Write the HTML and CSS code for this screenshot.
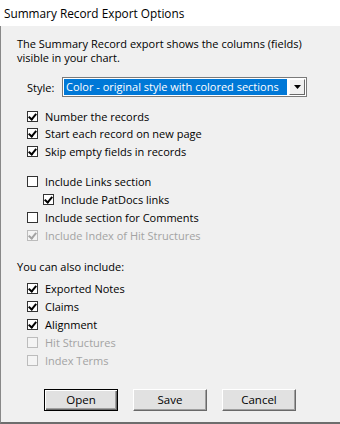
FILE: index.html
```html
<!DOCTYPE html>
<html>
<head>
<meta charset="utf-8">
<link rel="stylesheet" href="styles.css">
</head>
<body>
<div class="window">
  <div class="titlebar">Summary Record Export Options</div>
  <div class="content">
    <p class="intro">The Summary Record export shows the columns (fields)<br>visible in your chart.</p>
    <div class="style-row">
      <span class="style-label">Style:</span>
      <div class="combo">
        <span class="combo-value">Color - original style with colored sections</span>
        <span class="combo-btn"><svg width="7" height="4" viewBox="0 0 7 4"><path d="M0 0h7L3.5 4z" fill="#000"/></svg></span>
      </div>
    </div>

    <div class="group group-first">
      <div class="check"><span class="box on"></span><span class="lbl">Number the records</span></div>
      <div class="check"><span class="box on"></span><span class="lbl">Start each record on new page</span></div>
      <div class="check"><span class="box on"></span><span class="lbl">Skip empty fields in records</span></div>
    </div>

    <div class="group group-second">
      <div class="check"><span class="box"></span><span class="lbl">Include Links section</span></div>
      <div class="check indent"><span class="box on"></span><span class="lbl">Include PatDocs links</span></div>
      <div class="check"><span class="box"></span><span class="lbl">Include section for Comments</span></div>
      <div class="check disabled"><span class="box on"></span><span class="lbl">Include Index of Hit Structures</span></div>
    </div>

    <p class="also">You can also include:</p>

    <div class="group group-third">
      <div class="check"><span class="box on"></span><span class="lbl">Exported Notes</span></div>
      <div class="check"><span class="box on"></span><span class="lbl">Claims</span></div>
      <div class="check"><span class="box on"></span><span class="lbl">Alignment</span></div>
      <div class="check disabled"><span class="box"></span><span class="lbl">Hit Structures</span></div>
      <div class="check disabled"><span class="box"></span><span class="lbl">Index Terms</span></div>
    </div>

    <div class="buttons">
      <button class="btn default">Open</button>
      <button class="btn">Save</button>
      <button class="btn">Cancel</button>
    </div>
  </div>
</div>
</body>
</html>
```
FILE: styles.css
```css
html, body {
  margin: 0;
  padding: 0;
  background: #ffffff;
}
body {
  font-family: "Open Sans", "Noto Sans", sans-serif;
  font-size: 11px;
  color: #000;
}
.window {
  width: 340px;
  height: 424px;
  display: flex;
  flex-direction: column;
  box-sizing: border-box;
}
.titlebar {
  height: 26px;
  background: #fff;
  padding-left: 4px;
  font-size: 11.8px;
  line-height: 26px;
  color: #000;
}
.content {
  flex: 1;
  background: #f0f0f0;
  border-left: 1px solid #888;
  border-bottom: 2px solid #6d6d6d;
  padding: 11px 0 0 16px;
  display: flex;
  flex-direction: column;
}
.intro {
  margin: 0;
  line-height: 14px;
}
.style-row {
  display: flex;
  align-items: center;
  margin-top: 12px;
  padding-left: 10px;
}
.style-label {
  width: 35px;
}
.combo {
  width: 241px;
  height: 16px;
  border: 1px solid #7a7a7a;
  background: #fff;
  display: flex;
  align-items: center;
  padding: 1px;
  box-sizing: content-box;
}
.combo-value {
  flex: 1;
  height: 16px;
  line-height: 16px;
  background: #0078d7;
  color: #fff;
  padding-left: 2px;
  font-size: 11px;
  margin-right: 2px;
  white-space: nowrap;
  overflow: hidden;
}
.combo-btn {
  width: 14px;
  height: 14px;
  border-top: 1px solid #fff;
  border-left: 1px solid #fff;
  border-right: 1px solid #696969;
  border-bottom: 1px solid #696969;
  background: #f0f0f0;
  display: flex;
  align-items: center;
  justify-content: center;
}
.group {
  display: flex;
  flex-direction: column;
  padding-left: 10px;
}
.group-first { margin-top: 10.5px; }
.group-first .check { height: 17.5px; }
.group-second { margin-top: 12.5px; }
.group-third { margin-top: 6px; }
.check {
  display: flex;
  align-items: center;
  height: 18px;
}
.check.indent { padding-left: 16px; }
.box {
  width: 11px;
  height: 11px;
  box-sizing: border-box;
  border: 1px solid #333;
  background: #fff;
  margin-right: 7px;
  position: relative;
  flex: none;
}
.box.on::after {
  content: "";
  position: absolute;
  left: 2px;
  top: 0px;
  width: 3px;
  height: 6px;
  border-right: 2px solid #000;
  border-bottom: 2px solid #000;
  transform: rotate(40deg);
}
.check.disabled .lbl { color: #a3a3a3; }
.check.disabled .box {
  border-color: #bcbcbc;
  background: #f4f4f4;
}
.check.disabled .box.on::after {
  border-color: #a3a3a3;
}
.also {
  margin: 15px 0 0 0;
  line-height: 14px;
}
.buttons {
  display: flex;
  margin-top: 19px;
  padding-left: 27px;
  gap: 15px;
}
.btn {
  width: 74px;
  height: 22px;
  font-family: inherit;
  font-size: 11.5px;
  color: #000;
  background: #e1e1e1;
  border: 1px solid;
  border-color: #fff #696969 #696969 #fff;
  box-shadow: inset -1px -1px 0 #a0a0a0;
  padding: 0;
}
.btn.default {
  border: 1px solid #000;
  box-shadow: inset 1px 1px 0 #fff, inset -1px -1px 0 #696969, inset -2px -2px 0 #a0a0a0;
}
```
